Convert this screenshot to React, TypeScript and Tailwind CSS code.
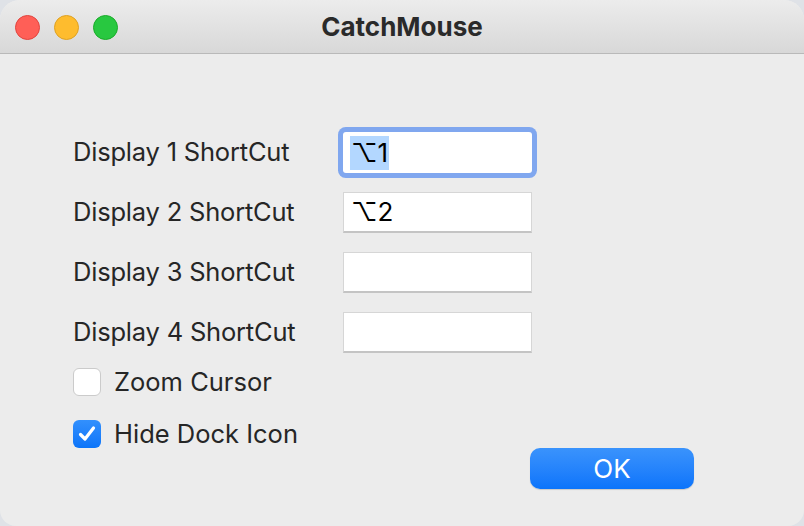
import { useState } from "react";

const font = { fontFamily: "Inter, 'DejaVu Sans', sans-serif" };

function Field({ value, focused }: { value?: string; focused?: boolean }) {
  return (
    <div
      className={
        "flex h-[41px] w-[189px] items-center bg-white pl-[7px] " +
        (focused
          ? "rounded-[3px] ring-[5px] ring-[#80a7ef]"
          : "border border-[#d6d6d6] border-b-2 border-b-[#c4c4c4]")
      }
    >
      {value &&
        (focused ? (
          <span className="bg-[#b3d7ff] px-[1px] text-[26px] leading-[34px] text-black">
            {value}
          </span>
        ) : (
          <span className="text-[26px] leading-[34px] text-black">{value}</span>
        ))}
    </div>
  );
}

function Checkbox({ checked, label }: { checked: boolean; label: string }) {
  return (
    <div className="flex h-[28px] items-center">
      {checked ? (
        <div className="flex h-[28px] w-[28px] items-center justify-center rounded-[6px] bg-gradient-to-b from-[#3290fd] to-[#0a74f9]">
          <svg width="20" height="20" viewBox="0 0 20 20">
            <path
              d="M3.5 10.5 L8 15 L16.5 4"
              fill="none"
              stroke="white"
              strokeWidth="3.2"
              strokeLinecap="round"
              strokeLinejoin="round"
            />
          </svg>
        </div>
      ) : (
        <div className="h-[28px] w-[28px] rounded-[6px] border border-[#cbcbcb] bg-white" />
      )}
      <span className="ml-[13px] text-[25.5px] text-[#262626]">{label}</span>
    </div>
  );
}

export default function App() {
  const [rows] = useState([
    { label: "Display 1 ShortCut", value: "⌥1", focused: true },
    { label: "Display 2 ShortCut", value: "⌥2" },
    { label: "Display 3 ShortCut", value: "" },
    { label: "Display 4 ShortCut", value: "" },
  ]);

  return (
    <div className="h-[526px] w-[804px] bg-[#dfe2e7]" style={font}>
      <div className="flex h-full w-full flex-col overflow-hidden rounded-t-[20px] rounded-b-[16px] bg-[#ececec]">
        {/* Title bar */}
        <div className="relative flex h-[54px] shrink-0 items-center justify-center border-b border-[#b9b9b9] bg-gradient-to-b from-[#ececec] to-[#d8d8d8]">
          <div className="absolute left-[15px] top-[15px] flex gap-[14px]">
            <div className="h-[25px] w-[25px] rounded-full border border-[#e0443e] bg-[#ff5f57]" />
            <div className="h-[25px] w-[25px] rounded-full border border-[#dea123] bg-[#febc2e]" />
            <div className="h-[25px] w-[25px] rounded-full border border-[#1aab29] bg-[#28c840]" />
          </div>
          <span className="text-[26px] font-bold text-[#2a2a2a]">CatchMouse</span>
        </div>

        {/* Body */}
        <div className="flex flex-col pl-[73px] pt-[78px]">
          <div className="flex flex-col gap-[19px]">
            {rows.map((r) => (
              <div key={r.label} className="flex h-[41px] items-center">
                <span className="w-[270px] text-[25.5px] tracking-[-0.2px] text-[#262626]">
                  {r.label}
                </span>
                <Field value={r.value} focused={r.focused} />
              </div>
            ))}
          </div>
          <div className="mt-[15px] flex flex-col gap-[24px]">
            <Checkbox checked={false} label="Zoom Cursor" />
            <Checkbox checked={true} label="Hide Dock Icon" />
          </div>
          <div className="flex justify-end pr-[110px]">
            <button className="h-[41px] w-[164px] rounded-[10px] bg-gradient-to-b from-[#3a93fc] to-[#0a74fb] text-[26px] text-white shadow-[0_1px_1px_rgba(0,0,0,0.15)]">
              OK
            </button>
          </div>
        </div>
      </div>
    </div>
  );
}
